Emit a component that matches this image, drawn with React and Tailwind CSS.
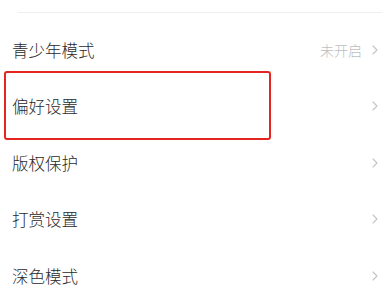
import React from 'react';

const rows = [
  { label: '青少年模式', value: '未开启' },
  { label: '偏好设置', highlight: true },
  { label: '版权保护' },
  { label: '打赏设置' },
  { label: '深色模式' },
];

function Chevron() {
  return (
    <svg width="6" height="10" viewBox="0 0 6 10" fill="none" className="shrink-0">
      <path d="M1 1l4 4-4 4" stroke="#c4c4c4" strokeWidth="1.1" strokeLinecap="round" strokeLinejoin="round" />
    </svg>
  );
}

function SettingRow({ label, value }) {
  return (
    <div className="flex h-[56.5px] items-center justify-between pl-3 pr-[4px]">
      <span className="text-[16.5px] font-light leading-none text-[#2a2a2a]">{label}</span>
      <div className="flex items-center gap-[10px]">
        {value && <span className="text-[14px] font-light leading-none text-[#bdbdbd]">{value}</span>}
        <Chevron />
      </div>
    </div>
  );
}

export default function App() {
  return (
    <div
      className="relative h-[285px] w-[382px] overflow-hidden bg-white"
      style={{ fontFamily: '"Noto Sans CJK SC", "Noto Sans", sans-serif' }}
    >
      {/* divider */}
      <div className="pt-3 pl-[18px]">
        <div className="h-px bg-[#efefef]" />
      </div>
      <div className="pt-[8.5px]">
        {rows.map((r) => (
          <div key={r.label} className="relative">
            <SettingRow label={r.label} value={r.value} />
            {r.highlight && (
              <div className="absolute left-[4px] top-[-7px] h-[69px] w-[267px] rounded-[3px] border-[2.5px] border-[#e52620]" />
            )}
          </div>
        ))}
      </div>
    </div>
  );
}
